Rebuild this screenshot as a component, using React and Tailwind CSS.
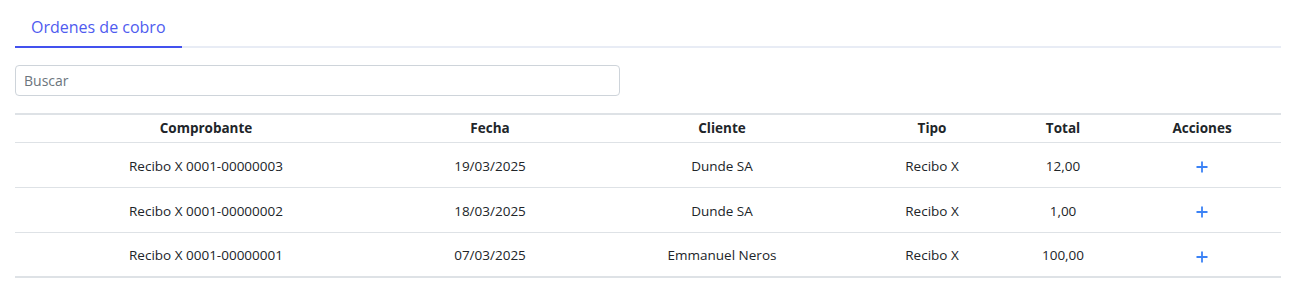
import React from "react";

const rows = [
  ["Recibo X 0001-00000003", "19/03/2025", "Dunde SA", "Recibo X", "12,00"],
  ["Recibo X 0001-00000002", "18/03/2025", "Dunde SA", "Recibo X", "1,00"],
  ["Recibo X 0001-00000001", "07/03/2025", "Emmanuel Neros", "Recibo X", "100,00"],
];

function Plus() {
  return (
    <svg width="14" height="14" viewBox="0 0 14 14" className="inline-block align-middle">
      <path d="M7 1.5v11M1.5 7h11" stroke="#3b82f6" strokeWidth="1.8" />
    </svg>
  );
}

export default function App() {
  return (
    <div className="bg-white pl-[15px] pr-[12px] font-['Open_Sans',sans-serif] text-[#212529]">
      <div className="flex border-b-2 border-[#e8ecf5]">
        <div className="-mb-[2px] border-b-2 border-[#4351ee] px-4 pt-[15px] pb-[7px] text-[16px] leading-6 text-[#4f5bef]">
          Ordenes de cobro
        </div>
      </div>
      <div className="mt-[17px]">
        <input
          placeholder="Buscar"
          className="h-[31px] w-[605px] rounded-[4px] border border-[#ced4da] px-2 text-[14px] text-[#212529] placeholder:text-[#6c757d] outline-none"
        />
      </div>
      <table className="mt-[17px] w-full table-fixed border-collapse text-[13.5px]">
        <colgroup>
          <col className="w-[382px]" />
          <col className="w-[186px]" />
          <col className="w-[278px]" />
          <col className="w-[142px]" />
          <col className="w-[120px]" />
          <col className="w-[158px]" />
        </colgroup>
        <thead>
          <tr className="border-t-2 border-b border-[#dee2e6]">
            {["Comprobante", "Fecha", "Cliente", "Tipo", "Total", "Acciones"].map((h) => (
              <th key={h} className="h-[28px] p-0 text-center font-bold leading-5 text-[#212529]">
                {h}
              </th>
            ))}
          </tr>
        </thead>
        <tbody>
          {rows.map((r, i) => (
            <tr key={i} className={i === rows.length - 1 ? "border-b-2 border-[#dee2e6]" : "border-b border-[#dee2e6]"}>
              {r.map((c, j) => (
                <td key={j} className="h-[45px] p-0 pt-[2px] text-center leading-5">
                  {c}
                </td>
              ))}
              <td className="h-[45px] p-0 pt-[2px] text-center">
                <Plus />
              </td>
            </tr>
          ))}
        </tbody>
      </table>
    </div>
  );
}
